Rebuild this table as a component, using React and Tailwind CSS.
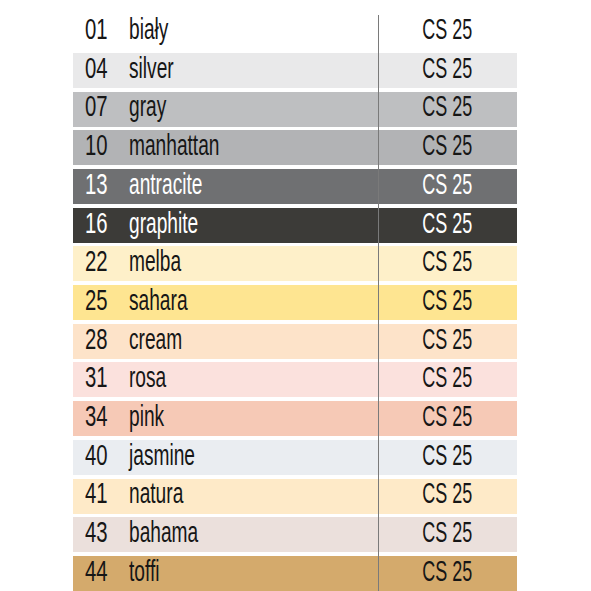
// Tabela kolorów – numer, nazwa, grubość
const rows = [
  { no: "01", name: "biały", bg: "bg-[#ffffff]", dark: false },
  { no: "04", name: "silver", bg: "bg-[#e9e9ea]", dark: false },
  { no: "07", name: "gray", bg: "bg-[#bebfc1]", dark: false },
  { no: "10", name: "manhattan", bg: "bg-[#b2b3b5]", dark: false },
  { no: "13", name: "antracite", bg: "bg-[#6f7072]", dark: true },
  { no: "16", name: "graphite", bg: "bg-[#3c3b38]", dark: true },
  { no: "22", name: "melba", bg: "bg-[#fef0c9]", dark: false },
  { no: "25", name: "sahara", bg: "bg-[#fee591]", dark: false },
  { no: "28", name: "cream", bg: "bg-[#fde3c9]", dark: false },
  { no: "31", name: "rosa", bg: "bg-[#fbe1dd]", dark: false },
  { no: "34", name: "pink", bg: "bg-[#f6c9b6]", dark: false },
  { no: "40", name: "jasmine", bg: "bg-[#eaedf1]", dark: false },
  { no: "41", name: "natura", bg: "bg-[#feeac8]", dark: false },
  { no: "43", name: "bahama", bg: "bg-[#ebe0dc]", dark: false },
  { no: "44", name: "toffi", bg: "bg-[#d4aa6c]", dark: false },
];

export default function App() {
  return (
    <div
      className="w-[591px] h-[591px] bg-white overflow-hidden"
      style={{ fontFamily: '"Liberation Sans", Arial, sans-serif' }}
    >
      <div className="relative ml-[73px] w-[444px] pt-[14.3px] flex flex-col gap-[3.7px]">
        {rows.map((r) => (
          <ColorRow key={r.no} {...r} />
        ))}

        {/* pionowa linia podziału */}
        <div className="absolute left-[305px] top-[15px] bottom-0 w-px bg-[#7a7a7a]" />
      </div>
    </div>
  );
}

function ColorRow({ no, name, bg, dark }) {
  const text = dark ? "text-white" : "text-[#161616]";
  return (
    <div className={`flex items-center h-[35px] ${bg} ${text} text-[29px] leading-none pb-[4.4px]`}>
      <span className="w-[56px] pl-[12px]">
        <span className="inline-block origin-left scale-x-[0.7]">{no}</span>
      </span>
      <span className="w-[249px]">
        <span className="inline-block origin-left scale-x-[0.66]">{name}</span>
      </span>
      <span className="flex-1 text-center">
        <span className="inline-block origin-center scale-x-[0.62]">CS 25</span>
      </span>
    </div>
  );
}
